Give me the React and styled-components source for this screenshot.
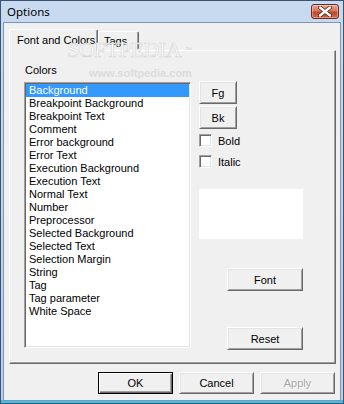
import React from "react";
import styled, { createGlobalStyle } from "styled-components";

const GlobalStyle = createGlobalStyle`
  html, body {
    margin: 0;
    padding: 0;
    background: #ffffff;
  }
  body {
    font-family: "Liberation Sans", Arial, sans-serif;
    font-size: 11px;
    color: #000;
  }
  * {
    box-sizing: border-box;
  }
`;

const Window = styled.div`
  position: relative;
  width: 344px;
  height: 404px;
  display: flex;
  flex-direction: column;
  border: 1px solid #3c536f;
  background: linear-gradient(
    #c8daef,
    #b9cfe8 calc(100% - 3px),
    #3cc2e6 calc(100% - 3px)
  );
  overflow: hidden;
`;

const TitleBar = styled.div`
  height: 21px;
  display: flex;
  align-items: center;
  justify-content: space-between;
  padding: 0 4px 0 6px;
`;

const Title = styled.span`
  font-family: "Noto Sans", "Open Sans", sans-serif;
  font-size: 11.5px;
  color: #000;
`;

const CloseButton = styled.div`
  width: 28px;
  height: 15px;
  display: flex;
  align-items: center;
  justify-content: center;
  border: 1px solid #6e2a1d;
  border-radius: 3px;
  background: linear-gradient(#e8a795, #d57761 45%, #c4452a 55%, #d0684a);
  box-shadow: inset 0 0 0 1px rgba(255, 255, 255, 0.35);
`;

const Client = styled.div`
  flex: 1;
  margin: 0 2px 2px 2px;
  border: 1px solid #7b97b8;
  background: #f0f0f0;
  display: flex;
  flex-direction: column;
  padding: 6px 4px 6px 5px;
`;

const TabRow = styled.div`
  position: relative;
  z-index: 1;
  display: flex;
  align-items: flex-end;
  margin-bottom: -1px;
`;

const Tab = styled.div`
  height: ${(p) => (p.$active ? 22 : 19)}px;
  width: ${(p) => p.$w}px;
  margin-bottom: ${(p) => (p.$active ? 0 : 1)}px;
  padding-top: ${(p) => (p.$active ? 4 : 3)}px;
  padding-left: ${(p) => p.$pad}px;
  background: #f0f0f0;
  border-top: 1px solid #ffffff;
  border-left: 1px solid #ffffff;
  border-right: 1px solid #696969;
  box-shadow: inset -1px 0 #a0a0a0;
  border-radius: 2px 2px 0 0;
  font-size: 11px;
  line-height: 13px;
  white-space: nowrap;
`;

const Panel = styled.div`
  flex: 1;
  display: flex;
  align-items: flex-start;
  gap: 8px;
  padding: 13px 14px;
  border-top: 1px solid #ffffff;
  border-left: 1px solid #ffffff;
  border-right: 1px solid #696969;
  border-bottom: 1px solid #696969;
  box-shadow: inset -1px -1px #a0a0a0;
`;

const LeftColumn = styled.div`
  display: flex;
  flex-direction: column;
`;

const Label = styled.div`
  height: 13px;
  line-height: 13px;
  padding-left: 1px;
  margin-bottom: 5px;
`;

const ListBox = styled.div`
  width: 167px;
  height: 266px;
  background: #ffffff;
  border-top: 1px solid #a0a0a0;
  border-left: 1px solid #a0a0a0;
  border-right: 1px solid #ffffff;
  border-bottom: 1px solid #ffffff;
  box-shadow: inset 1px 1px #696969, inset -1px -1px #e3e3e3;
  padding: 1px;
  display: flex;
  flex-direction: column;
`;

const ListItem = styled.div`
  height: 13px;
  line-height: 13px;
  padding-left: 3px;
  white-space: nowrap;
  background: ${(p) => (p.$selected ? "#3399ff" : "transparent")};
  color: ${(p) => (p.$selected ? "#ffffff" : "#000000")};
`;

const RightColumn = styled.div`
  width: 104px;
  padding-top: 17px;
  display: flex;
  flex-direction: column;
  align-items: flex-start;
`;

const Button = styled.button`
  width: ${(p) => p.$w}px;
  height: ${(p) => p.$h || 23}px;
  margin-top: ${(p) => p.$mt || 0}px;
  align-self: ${(p) => (p.$right ? "flex-end" : "auto")};
  padding: 0;
  background: #f0f0f0;
  font-family: "Liberation Sans", Arial, sans-serif;
  font-size: 11px;
  color: ${(p) => (p.disabled ? "#a6a6a6" : "#000")};
  text-shadow: ${(p) => (p.disabled ? "1px 1px #ffffff" : "none")};
  border: 1px solid;
  border-color: ${(p) =>
    p.$default ? "#000 #000 #000 #000" : "#ffffff #696969 #696969 #ffffff"};
  box-shadow: ${(p) =>
    p.$default
      ? "inset 1px 1px #ffffff, inset -1px -1px #696969, inset -2px -2px #a0a0a0"
      : "inset 1px 1px #e3e3e3, inset -1px -1px #a0a0a0"};
  cursor: default;
`;

const CheckRow = styled.label`
  display: flex;
  align-items: center;
  gap: 6px;
  height: 13px;
  margin-top: ${(p) => p.$mt}px;
`;

const CheckBox = styled.span`
  width: 13px;
  height: 13px;
  background: #ffffff;
  border-top: 1px solid #a0a0a0;
  border-left: 1px solid #a0a0a0;
  border-right: 1px solid #ffffff;
  border-bottom: 1px solid #ffffff;
  box-shadow: inset 1px 1px #696969, inset -1px -1px #e3e3e3;
`;

const Preview = styled.div`
  width: 104px;
  height: 50px;
  margin-top: 21px;
  background: #ffffff;
`;

const ButtonRow = styled.div`
  display: flex;
  justify-content: flex-end;
  gap: 6px;
  margin-top: 8px;
  padding-right: 1px;
`;

/* softpedia watermark, lies over the tab strip as in the screenshot */
const Watermark = styled.div`
  position: absolute;
  left: 66px;
  top: 38px;
  line-height: 22px;
  font-family: "Liberation Serif", serif;
  font-size: 22px;
  letter-spacing: -0.5px;
  color: #fbfbfb;
  -webkit-text-stroke: 0.6px #d6d6d6;
  pointer-events: none;
  z-index: 2;
`;

const Trademark = styled.span`
  font-family: "Liberation Sans", sans-serif;
  font-size: 7px;
  vertical-align: top;
  margin-left: 4px;
  -webkit-text-stroke: 0;
  color: #d4d4d4;
`;

const WatermarkUrl = styled.div`
  position: absolute;
  left: 88px;
  top: 66px;
  font-family: "Liberation Sans", sans-serif;
  font-size: 11px;
  font-weight: bold;
  color: #dcdcdc;
  pointer-events: none;
  z-index: 2;
`;

const colorNames = [
  "Background",
  "Breakpoint Background",
  "Breakpoint Text",
  "Comment",
  "Error background",
  "Error Text",
  "Execution Background",
  "Execution Text",
  "Normal Text",
  "Number",
  "Preprocessor",
  "Selected Background",
  "Selected Text",
  "Selection Margin",
  "String",
  "Tag",
  "Tag parameter",
  "White Space",
];

const CloseIcon = () => (
  <svg width="14" height="11" viewBox="0 0 14 11">
    <path
      d="M2 1.5 L12 9.5 M12 1.5 L2 9.5"
      stroke="#5a2418"
      strokeWidth="4"
      strokeLinecap="round"
    />
    <path
      d="M2 1.5 L12 9.5 M12 1.5 L2 9.5"
      stroke="#ffffff"
      strokeWidth="2.4"
      strokeLinecap="round"
    />
  </svg>
);

const App = () => {
  return (
    <Window>
      <GlobalStyle />
      <TitleBar>
        <Title>Options</Title>
        <CloseButton>
          <CloseIcon />
        </CloseButton>
      </TitleBar>
      <Client>
        <TabRow>
          <Tab $active $w={89} $pad={7}>
            Font and Colors
          </Tab>
          <Tab $w={41} $pad={5}>
            Tags
          </Tab>
        </TabRow>
        <Panel>
          <LeftColumn>
            <Label>Colors</Label>
            <ListBox>
              {colorNames.map((name, i) => (
                <ListItem key={name} $selected={i === 0}>
                  {name}
                </ListItem>
              ))}
            </ListBox>
          </LeftColumn>
          <RightColumn>
            <Button $w={38}>Fg</Button>
            <Button $w={38} $mt={2}>
              Bk
            </Button>
            <CheckRow $mt={5}>
              <CheckBox />
              Bold
            </CheckRow>
            <CheckRow $mt={8}>
              <CheckBox />
              Italic
            </CheckRow>
            <Preview />
            <Button $w={76} $mt={29} $right>
              Font
            </Button>
            <Button $w={76} $mt={36} $right>
              Reset
            </Button>
          </RightColumn>
        </Panel>
        <ButtonRow>
          <Button $w={75} $h={22} $default>
            OK
          </Button>
          <Button $w={75} $h={22}>
            Cancel
          </Button>
          <Button $w={75} $h={22} disabled>
            Apply
          </Button>
        </ButtonRow>
      </Client>
      <Watermark>
        SOFTPEDIA<Trademark>™</Trademark>
      </Watermark>
      <WatermarkUrl>www.softpedia.com</WatermarkUrl>
    </Window>
  );
};

export default App;
